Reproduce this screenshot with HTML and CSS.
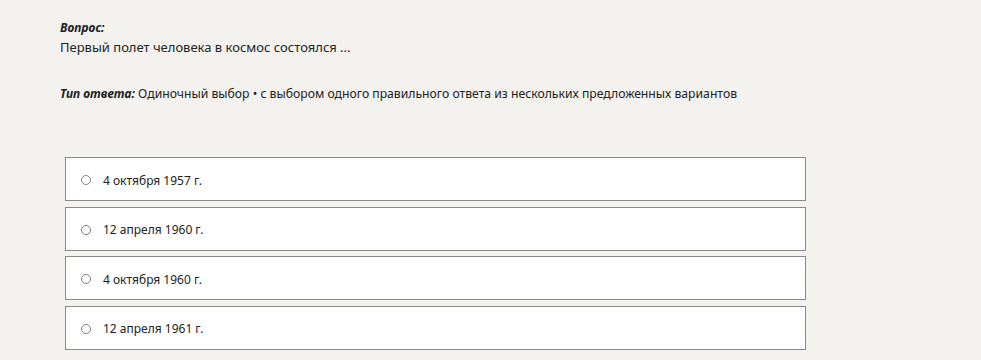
FILE: index.html
```html
<!DOCTYPE html>
<html lang="ru">
<head>
    <meta charset="UTF-8">
    <meta name="viewport" content="width=device-width, initial-scale=1.0">
    <title>Вопрос</title>
    <link rel="stylesheet" href="styles.css">
</head>
<body>

    <div class="question">
        <div class="label">Вопрос:</div>
        <div class="text">Первый полет человека в космос состоялся ...</div>

        <div class="type"><span class="label">Тип ответа:</span> Одиночный выбор • с выбором одного правильного ответа из нескольких предложенных вариантов</div>

        <div class="answers">
            <label class="answer"><span class="radio"></span>4 октября 1957 г.</label>
            <label class="answer"><span class="radio"></span>12 апреля 1960 г.</label>
            <label class="answer"><span class="radio"></span>4 октября 1960 г.</label>
            <label class="answer"><span class="radio"></span>12 апреля 1961 г.</label>
        </div>
    </div>

</body>
</html>
```

FILE: styles.css
```css
* {
    box-sizing: border-box;
}

body {
    margin: 0;
    background-color: #f3f2ee;
    font-family: "Noto Sans", "Open Sans", sans-serif;
    font-size: 13px;
    color: #222;
}

.question {
    padding: 19px 0 0 60px;
}

.label {
    font-weight: bold;
    font-style: italic;
    font-size: 12px;
}

.text {
    margin-top: 2px;
}

.type {
    margin-top: 29px;
    font-size: 12.2px;
}

.type .label {
    font-size: 12px;
}

.answers {
    margin-top: 55px;
    margin-left: 5px;
    width: 741px;
    display: flex;
    flex-direction: column;
    gap: 5.5px;
}

.answer {
    height: 44px;
    background-color: #fff;
    border: 1px solid #8a8a86;
    display: flex;
    align-items: center;
    padding: 2px 0 0 15px;
    font-size: 12px;
}

.radio {
    width: 10px;
    height: 10px;
    border: 1px solid #808080;
    border-radius: 50%;
    margin-right: 12px;
}
```
